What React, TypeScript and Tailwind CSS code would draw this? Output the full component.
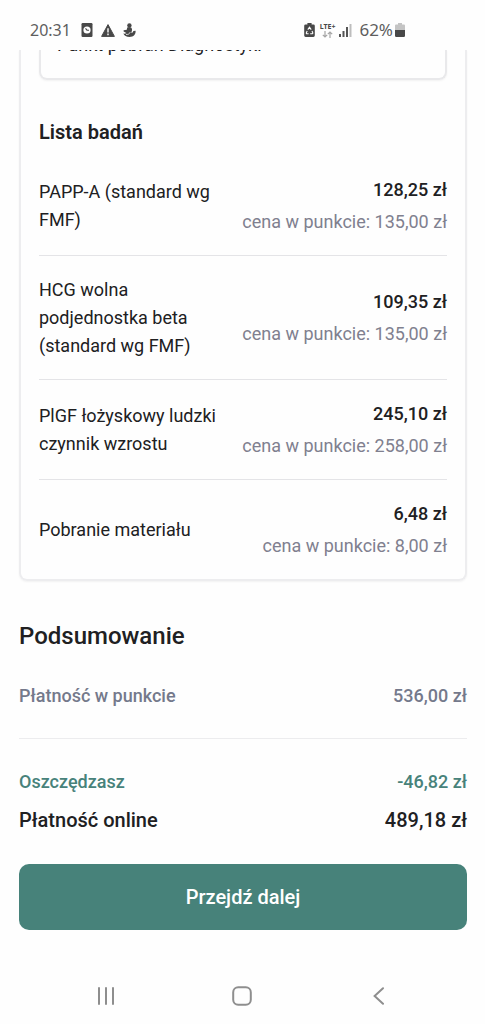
/**
 * Order summary screen
 * Lists the ordered tests with their prices and the payment totals
 */

interface Test {
  name: string;
  price: string;
  pointPrice: string;
}

const tests: Test[] = [
  { name: 'PAPP-A (standard wg FMF)', price: '128,25 zł', pointPrice: '135,00 zł' },
  {
    name: 'HCG wolna podjednostka beta (standard wg FMF)',
    price: '109,35 zł',
    pointPrice: '135,00 zł',
  },
  { name: 'PlGF łożyskowy ludzki czynnik wzrostu', price: '245,10 zł', pointPrice: '258,00 zł' },
  { name: 'Pobranie materiału', price: '6,48 zł', pointPrice: '8,00 zł' },
];

function StatusBar() {
  return (
    <div className="flex h-[50px] items-end justify-between pr-20 pb-2 pl-[30px] font-['Noto_Sans',sans-serif] text-[16px] leading-6 text-[#5e5e5e]">
      <div className="flex items-center gap-2">
        <span>20:31</span>
        {/* Clock */}
        <svg className="ml-0.5" width="12" height="14" viewBox="0 0 12 14">
          <rect x="0.5" width="11" height="14" rx="1.2" fill="#484848" />
          <circle cx="6" cy="7" r="3.6" fill="#fff" />
          <path d="M4.5 5.4L6 7.2H8" fill="none" stroke="#484848" strokeWidth="1.1" />
        </svg>
        {/* Warning */}
        <svg width="14" height="13" viewBox="0 0 14 13">
          <path
            d="M7 .6L13.4 12.4H.6Z"
            fill="#484848"
            stroke="#484848"
            strokeWidth="1"
            strokeLinejoin="round"
          />
          <path d="M7 4.2V8.4M7 9.6V11.2" stroke="#fff" strokeWidth="1.4" />
        </svg>
        <svg width="13" height="14" viewBox="0 0 13 14" fill="#484848">
          <circle cx="6.4" cy="2.4" r="2.2" />
          <path d="M4.2 4.6C5.6 3.4 8.8 3.8 9 6.2C9.1 7.8 8.6 8.8 8.2 9.8C9.6 9.8 10.4 9.2 10.2 8L12.6 7.8C12.9 11.4 10.6 14 6.6 14C3.4 14 1.2 12.8 .4 10.6C1.6 10.8 2.6 10.6 3.4 10L.6 8.6V7.2L3.8 6.8Z" />
          <path d="M3 11.4C5 11.8 6.6 10.8 7.2 9.2" fill="none" stroke="#fff" strokeWidth="0.8" />
        </svg>
      </div>

      <div className="flex items-center">
        {/* Battery saver */}
        <svg className="mr-[5px]" width="11" height="14" viewBox="0 0 11 14">
          <path d="M3.4 0H7.6V1.4H9.4Q10.8 1.4 10.8 2.8V12.6Q10.8 14 9.4 14H1.6Q.2 14 .2 12.6V2.8Q.2 1.4 1.6 1.4H3.4Z" fill="#484848" />
          <path
            d="M3.8 6.6L5.5 4.2L7.2 6.6M8 8L8.8 9.8Q8.9 10.8 7.8 10.8H6.2M4.6 10.8H3Q2 10.6 2.4 9.6L3.2 8"
            fill="none"
            stroke="#fff"
            strokeWidth="1.1"
          />
        </svg>
        <div className="mr-1 flex flex-col items-center">
          <span className="text-[7px] leading-2 font-bold text-[#484848]">LTE+</span>
          <svg width="11" height="7" viewBox="0 0 11 7" fill="none" stroke="#a5a5a5" strokeWidth="1.2">
            <path d="M3 0V6M.8 3.8L3 6L5.2 3.8" />
            <path d="M8 7V1M5.8 3.2L8 1L10.2 3.2" />
          </svg>
        </div>
        {/* Signal strength */}
        <svg className="mr-[7px]" width="13" height="14" viewBox="0 0 13 14" fill="#555">
          <rect x="0" y="11" width="2" height="3" />
          <rect x="3.5" y="8" width="2" height="6" />
          <rect x="7" y="4" width="2" height="10" />
          <rect x="10.5" y="1" width="2" height="13" fill="#bdbdbd" />
        </svg>
        <span className="text-[17px]">62%</span>
        <svg className="ml-[2px]" width="10" height="14" viewBox="0 0 10 14">
          <path d="M3 0H7V1.6H9Q10 1.6 10 2.8V7H0V2.8Q0 1.6 1 1.6H3Z" fill="#c4c4c4" />
          <path d="M0 7H10V12.8Q10 14 8.8 14H1.2Q0 14 0 12.8Z" fill="#484848" />
        </svg>
      </div>
    </div>
  );
}

function TestRow({ test }: { test: Test }) {
  return (
    <li className="flex items-center justify-between gap-5 border-b border-[#e4e4e7] pt-5 pb-[19px] last:border-b-0">
      <span>{test.name}</span>
      <div className="flex shrink-0 flex-col gap-1 text-right">
        <span className="font-medium">{test.price}</span>
        <span className="text-[#80808f]">cena w punkcie: {test.pointPrice}</span>
      </div>
    </li>
  );
}

function NavigationBar() {
  return (
    <nav className="grid grid-cols-3 px-[38px] pt-[52px] pb-[14px] text-[#8e8e8e]">
      <button type="button" aria-label="Ostatnie" className="flex h-7 items-center justify-center">
        <svg width="18" height="18" viewBox="0 0 18 18" stroke="currentColor" strokeWidth="2" strokeLinecap="round">
          <path d="M2 1V17M9 1V17M16 1V17" />
        </svg>
      </button>
      <button type="button" aria-label="Ekran główny" className="flex h-7 items-center justify-center">
        <svg width="20" height="20" viewBox="0 0 20 20" fill="none" stroke="currentColor" strokeWidth="2">
          <rect x="1.2" y="1.2" width="17.6" height="17.6" rx="5" />
        </svg>
      </button>
      <button type="button" aria-label="Wstecz" className="flex h-7 items-center justify-center">
        <svg width="12" height="18" viewBox="0 0 12 18" fill="none" stroke="currentColor" strokeWidth="2" strokeLinecap="round">
          <path d="M10 1.2L1.6 9L10 16.8" />
        </svg>
      </button>
    </nav>
  );
}

export default function App() {
  return (
    <div className="min-h-screen bg-[#fefefe] font-[Roboto,sans-serif] text-[18px] leading-7 text-[#202022]">
      <StatusBar />

      <main className="pr-[18px] pl-[19px]">
        {/* Card scrolled partly under the status bar */}
        <div className="-mx-1 overflow-hidden px-1 pb-2">
          <section className="rounded-b-lg border-x-2 border-b-2 border-[#ededef] px-[18px] shadow-xs">
            <div className="flex h-[30px] flex-col justify-end rounded-b-lg border-x-2 border-b-2 border-[#e9e9eb] px-4 pb-[19px] shadow-xs">
              <div className="flex h-[9px] items-end overflow-hidden">
                <p>Punkt pobrań Diagnostyki</p>
              </div>
            </div>
            <h3 className="mt-[38px] mb-[10px] text-[20px] font-semibold">Lista badań</h3>
            <ul>
              {tests.map((test) => (
                <TestRow key={test.name} test={test} />
              ))}
            </ul>
          </section>
        </div>

        {/* Totals */}
        <section>
          <h2 className="mt-[31px] mb-[30px] text-[24px] leading-8 font-medium">Podsumowanie</h2>
          <div className="flex justify-between border-b border-[#ececee] pb-7 font-medium text-[#74798b]">
            <span>Płatność w punkcie</span>
            <span>536,00 zł</span>
          </div>
          <div className="mt-[29px] flex justify-between font-medium text-[#47827a]">
            <span>Oszczędzasz</span>
            <span>-46,82 zł</span>
          </div>
          <div className="mt-[10px] flex justify-between text-[20px] font-medium">
            <span>Płatność online</span>
            <span>489,18 zł</span>
          </div>
        </section>

        <button
          type="button"
          className="mt-[30px] h-[66px] w-full rounded-[10px] bg-[#47827a] text-[20px] font-medium text-white"
        >
          Przejdź dalej
        </button>
      </main>

      <NavigationBar />
    </div>
  );
}
